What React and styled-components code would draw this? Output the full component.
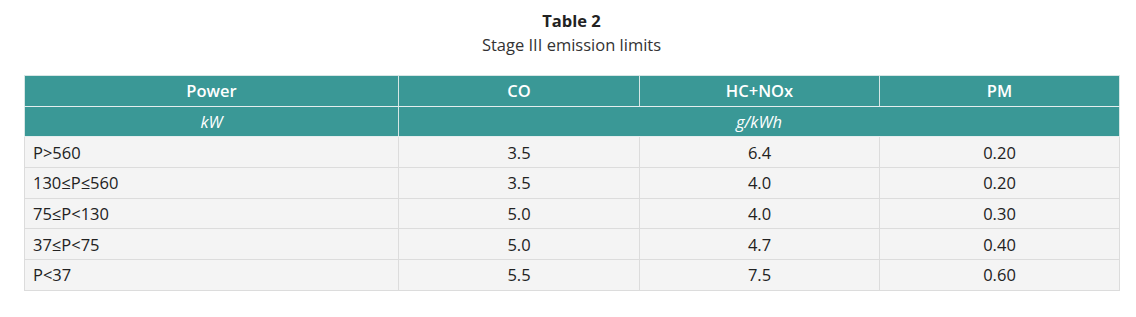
import React from 'react'
import styled, { createGlobalStyle } from 'styled-components'

const GlobalStyle = createGlobalStyle`
  body {
    margin: 0;
    background: #fff;
    font-family: "Open Sans", "Liberation Sans", sans-serif;
    color: #222;
  }
`

const Wrapper = styled.div`
  padding: 9px 17px 0 24px;
`

const Caption = styled.div`
  text-align: center;
  font-size: 16.5px;
  line-height: 24px;
  color: #333;
  margin-bottom: 18px;
`

const CaptionTitle = styled.div`
  font-weight: 700;
  color: #222;
`

const Table = styled.table`
  width: 1095px;
  border-collapse: collapse;
  table-layout: fixed;
  font-size: 16.5px;
`

const HeadCell = styled.th`
  background: #3a9896;
  color: #fff;
  font-weight: ${p => (p.$unit ? 400 : 600)};
  font-style: ${p => (p.$unit ? 'italic' : 'normal')};
  height: 29.7px;
  padding: 0 8px;
  text-align: center;
  border: 1px solid #d6e6e5;
  border-bottom-color: #e4eeee;
`

const Cell = styled.td`
  background: #f4f4f4;
  height: 29.7px;
  padding: 0 8px;
  text-align: ${p => (p.$left ? 'left' : 'center')};
  border: 1px solid #dcdcdc;
  color: #222;
`

const rows = [
  ['P>560', '3.5', '6.4', '0.20'],
  ['130≤P≤560', '3.5', '4.0', '0.20'],
  ['75≤P<130', '5.0', '4.0', '0.30'],
  ['37≤P<75', '5.0', '4.7', '0.40'],
  ['P<37', '5.5', '7.5', '0.60'],
]

export default function App() {
  return (
    <Wrapper>
      <GlobalStyle />
      <Caption>
        <CaptionTitle>Table 2</CaptionTitle>
        <div>Stage III emission limits</div>
      </Caption>
      <Table>
        <colgroup>
          <col style={{ width: 374 }} />
          <col style={{ width: 241 }} />
          <col style={{ width: 240 }} />
          <col style={{ width: 240 }} />
        </colgroup>
        <thead>
          <tr>
            <HeadCell>Power</HeadCell>
            <HeadCell>CO</HeadCell>
            <HeadCell>HC+NOx</HeadCell>
            <HeadCell>PM</HeadCell>
          </tr>
          <tr>
            <HeadCell $unit>kW</HeadCell>
            <HeadCell $unit colSpan={3}>g/kWh</HeadCell>
          </tr>
        </thead>
        <tbody>
          {rows.map(r => (
            <tr key={r[0]}>
              <Cell $left>{r[0]}</Cell>
              <Cell>{r[1]}</Cell>
              <Cell>{r[2]}</Cell>
              <Cell>{r[3]}</Cell>
            </tr>
          ))}
        </tbody>
      </Table>
    </Wrapper>
  )
}
